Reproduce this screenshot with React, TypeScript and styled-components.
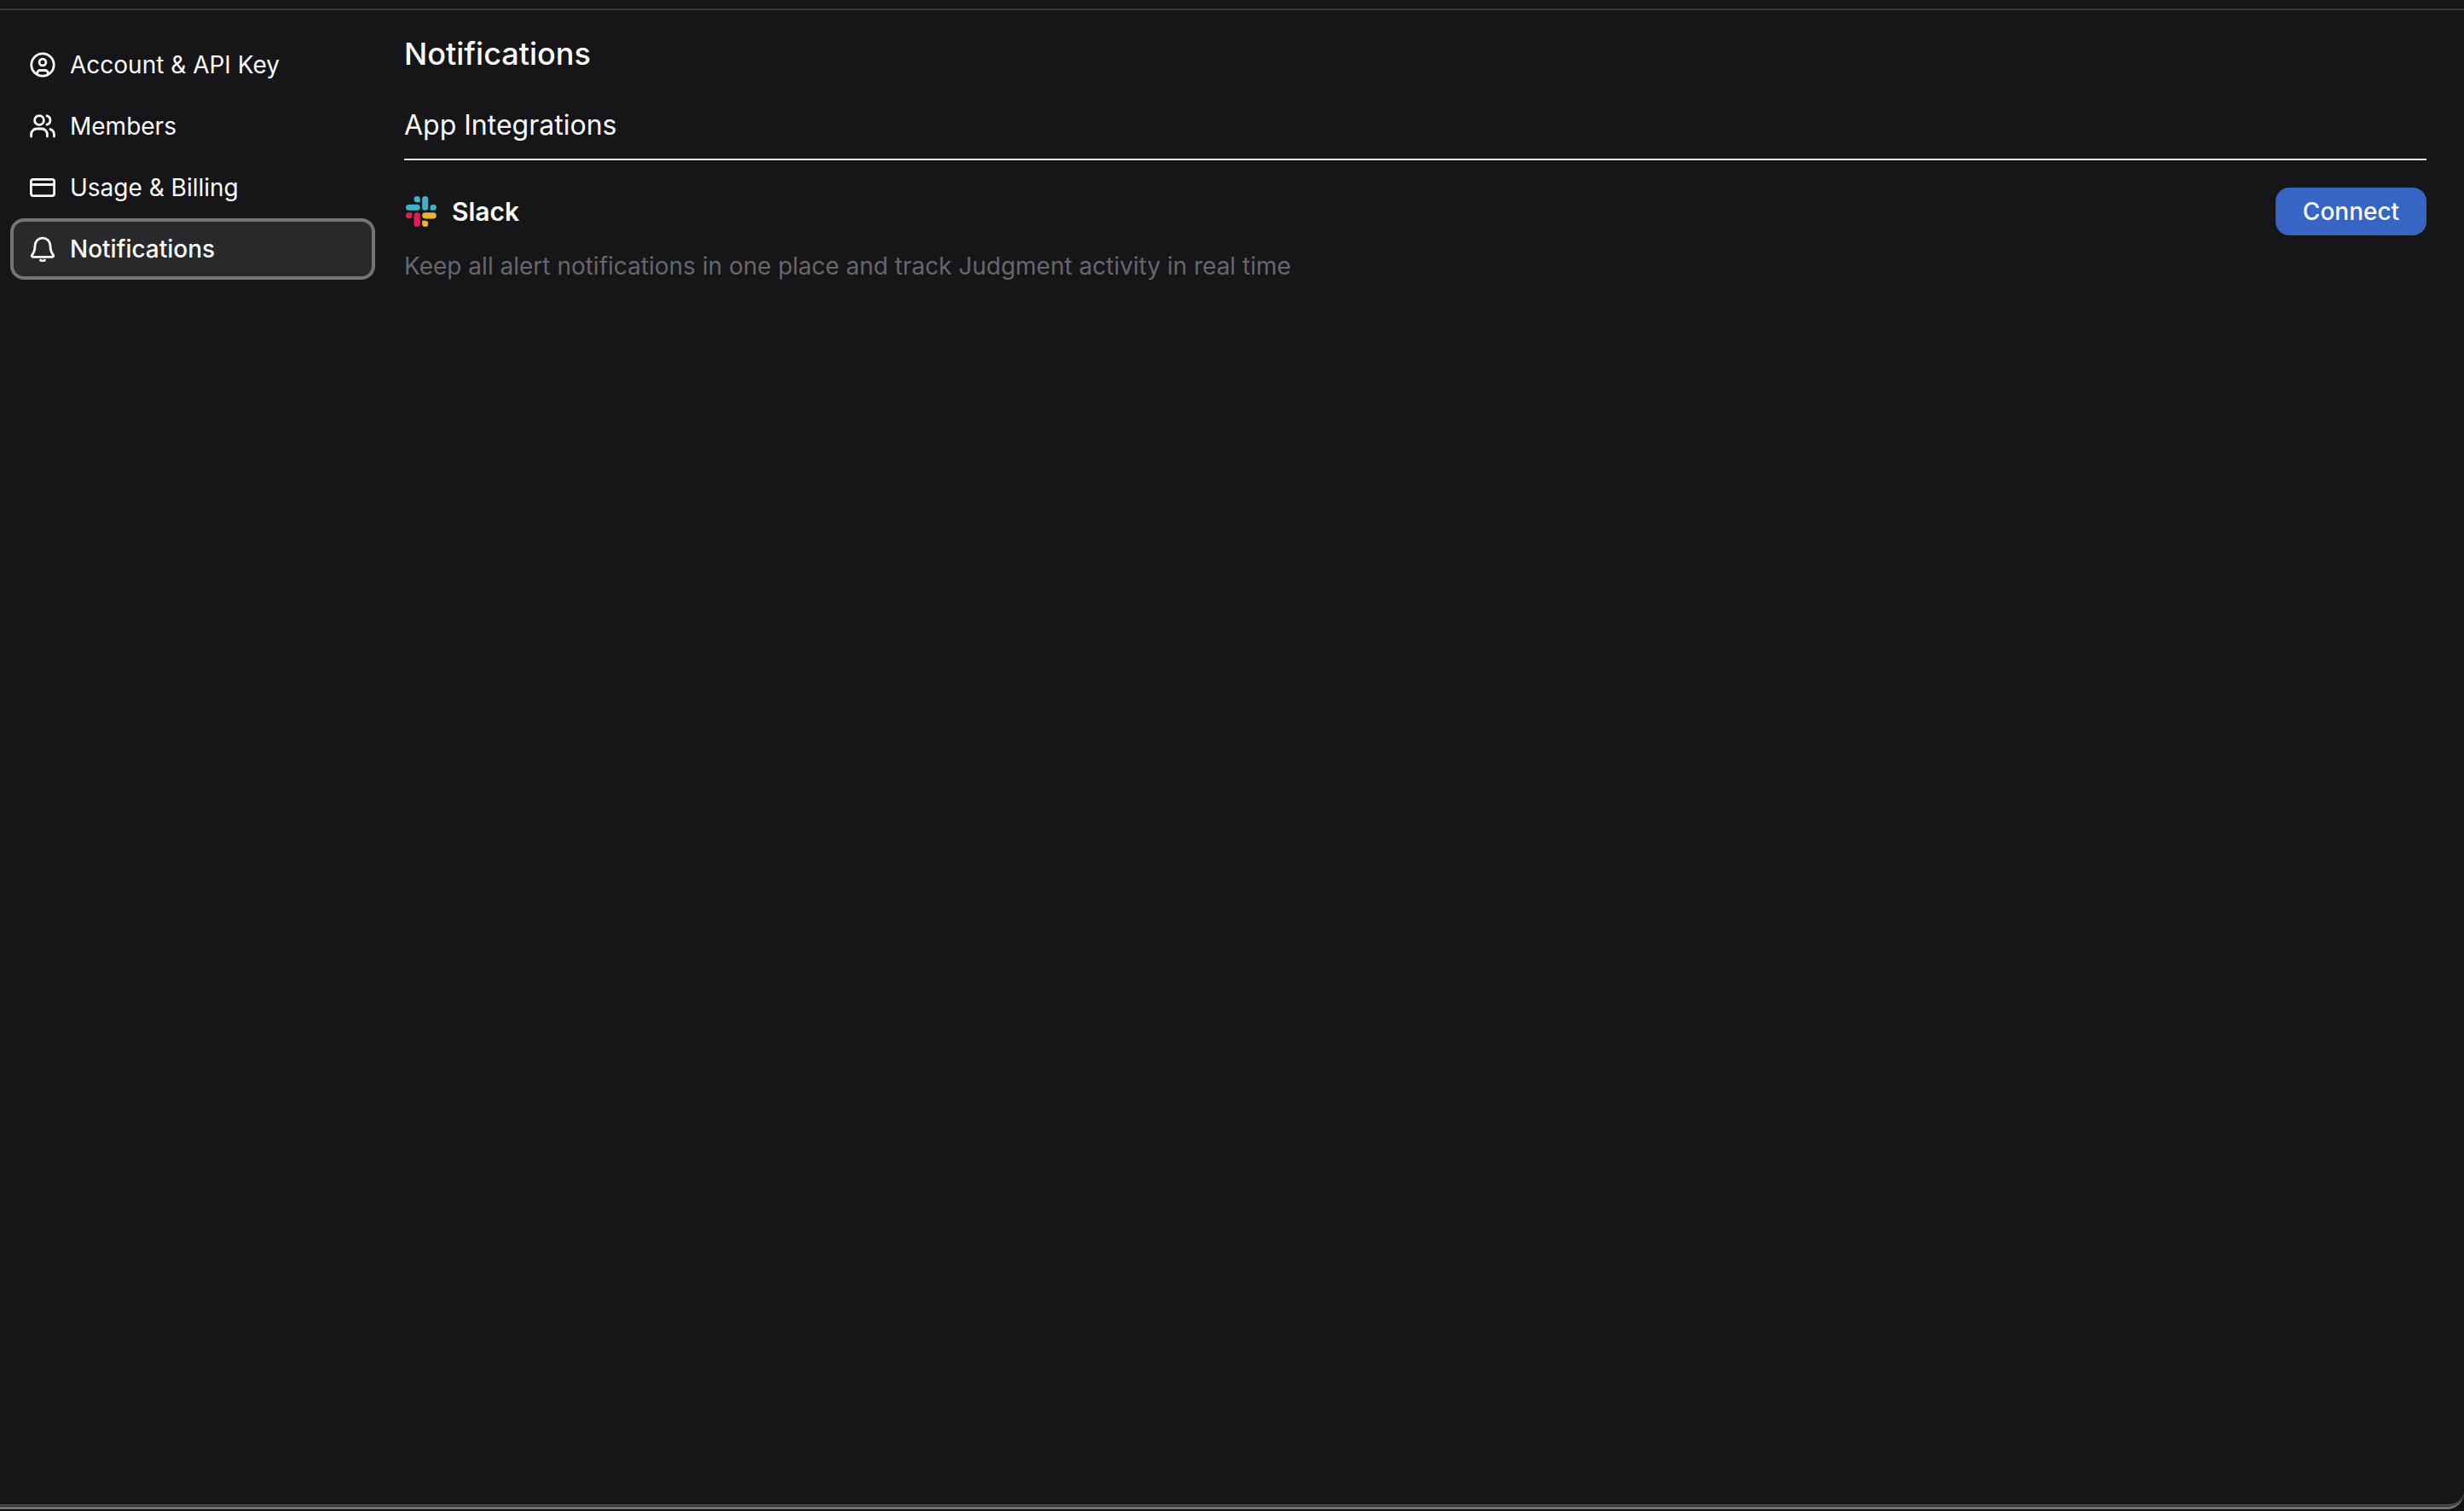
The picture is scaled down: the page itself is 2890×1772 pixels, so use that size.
import React from "react";
import styled, { createGlobalStyle } from "styled-components";

const Global = createGlobalStyle`
  html, body { margin: 0; padding: 0; background: #111113; }
  body { font-family: Inter, "Liberation Sans", sans-serif; -webkit-font-smoothing: antialiased; }
`;

const Frame = styled.div`
  height: 1772px;
  box-sizing: border-box;
  padding-bottom: 2px;
  background: #111113;
  display: flex;
  flex-direction: column;
`;

const Window = styled.div`
  flex: 1;
  min-height: 0;
  display: flex;
  flex-direction: column;
  background: #27272a;
  border-bottom: 3px solid #707072;
  border-bottom-right-radius: 20px;
  box-sizing: border-box;
`;

const Surface = styled.div`
  flex: 1;
  min-height: 0;
  display: flex;
  flex-direction: column;
  background: #161618;
  border-bottom: 2px solid #4a4a4c;
  margin-bottom: 1px;
  border-bottom-right-radius: 18px;
`;

const TopRule = styled.div`
  margin-top: 10px;
  height: 2px;
  background: #38383b;
`;

const Main = styled.div`
  flex: 1;
  display: flex;
  min-height: 0;
`;

const Sidebar = styled.nav`
  width: 428px;
  margin-left: 12px;
  padding-top: 28px;
  display: flex;
  flex-direction: column;
  flex: none;
`;

const NavItem = styled.div<{ $active?: boolean }>`
  height: 72px;
  box-sizing: border-box;
  display: flex;
  align-items: center;
  gap: 17px;
  padding-left: 19px;
  border: 4px solid ${(p) => (p.$active ? "#74747b" : "transparent")};
  border-radius: 16px;
  background: ${(p) => (p.$active ? "#29292c" : "transparent")};
  color: #fafafa;
  font-size: 28px;
  font-weight: ${(p) => (p.$active ? 500 : 400)};
  line-height: 40px;
`;

const NavIcon = styled.svg`
  width: 30px;
  height: 30px;
  flex: none;
  fill: none;
  stroke: #fafafa;
  stroke-width: 2.8;
  stroke-linecap: round;
  stroke-linejoin: round;
`;

const Content = styled.main`
  flex: 1;
  min-width: 0;
  margin-left: 34px;
  margin-right: 44px;
  padding-top: 29px;
`;

const Title = styled.h1`
  margin: 0;
  font-size: 36px;
  line-height: 44px;
  font-weight: 500;
  color: #fafafa;
`;

const SectionTitle = styled.h2`
  margin: 42px 0 0;
  padding-bottom: 19px;
  font-size: 32px;
  line-height: 40px;
  font-weight: 400;
  color: #fafafa;
  border-bottom: 2px solid #e6e6e6;
`;

const IntegrationRow = styled.div`
  margin-top: 32px;
  display: flex;
  align-items: center;
  justify-content: space-between;
`;

const IntegrationName = styled.div`
  display: flex;
  align-items: center;
  gap: 18px;
  color: #fafafa;
  font-size: 30px;
  font-weight: 600;
  line-height: 40px;
`;

const SlackMark = styled.svg`
  width: 36px;
  height: 36px;
  margin-left: 2px;
  flex: none;
`;

const ConnectButton = styled.button`
  width: 177px;
  height: 56px;
  border: none;
  border-radius: 16px;
  background: #3665c4;
  color: #fafafa;
  font-family: inherit;
  font-size: 28px;
  font-weight: 500;
  padding: 0;
`;

const Description = styled.p`
  margin: 16px 0 0;
  color: #66666e;
  font-size: 28px;
  line-height: 40px;
`;

const SlackLogo = () => (
  <SlackMark viewBox="0 0 54 54" aria-hidden="true">
    <path fill="#3fb2c6" d="M19.712.133a5.381 5.381 0 0 0-5.376 5.387 5.381 5.381 0 0 0 5.376 5.386h5.376V5.52A5.381 5.381 0 0 0 19.712.133m0 14.365H5.376A5.381 5.381 0 0 0 0 19.884a5.381 5.381 0 0 0 5.376 5.387h14.336a5.381 5.381 0 0 0 5.376-5.387 5.381 5.381 0 0 0-5.376-5.386" />
    <path fill="#3fb2c6" d="M53.76 19.884a5.381 5.381 0 0 0-5.376-5.386 5.381 5.381 0 0 0-5.376 5.386v5.387h5.376a5.381 5.381 0 0 0 5.376-5.387m-14.336 0V5.52A5.381 5.381 0 0 0 34.048.133a5.381 5.381 0 0 0-5.376 5.387v14.364a5.381 5.381 0 0 0 5.376 5.387 5.381 5.381 0 0 0 5.376-5.387" />
    <path fill="#ecb22e" d="M34.048 54a5.381 5.381 0 0 0 5.376-5.387 5.381 5.381 0 0 0-5.376-5.386h-5.376v5.386A5.381 5.381 0 0 0 34.048 54m0-14.365h14.336a5.381 5.381 0 0 0 5.376-5.386 5.381 5.381 0 0 0-5.376-5.387H34.048a5.381 5.381 0 0 0-5.376 5.387 5.381 5.381 0 0 0 5.376 5.386" />
    <path fill="#e01e5a" d="M0 34.249a5.381 5.381 0 0 0 5.376 5.386 5.381 5.381 0 0 0 5.376-5.386v-5.387H5.376A5.381 5.381 0 0 0 0 34.25m14.336-.001v14.364A5.381 5.381 0 0 0 19.712 54a5.381 5.381 0 0 0 5.376-5.387V34.25a5.381 5.381 0 0 0-5.376-5.387 5.381 5.381 0 0 0-5.376 5.387" />
  </SlackMark>
);

const AccountIcon = () => (
  <NavIcon viewBox="0 0 30 30">
    <circle cx="15" cy="15" r="13.2" />
    <circle cx="15" cy="12" r="3.9" />
    <path d="M8.600 25.700V25a3.500 3.500 0 0 1 3.500-3.500h5.800a3.500 3.500 0 0 1 3.500 3.500v.7" />
  </NavIcon>
);

const MembersIcon = () => (
  <NavIcon viewBox="0 0 30 30">
    <circle cx="11" cy="8" r="5.4" />
    <path d="M1.600 27v-2.500A6.500 6.500 0 0 1 8 18h6a6.500 6.500 0 0 1 6.400 6.500V27" />
    <path d="M20 2.800a5.400 5.400 0 0 1 0 10.400" />
    <path d="M24 18.600a6.500 6.500 0 0 1 4.400 6V27" />
  </NavIcon>
);

const BillingIcon = () => (
  <NavIcon viewBox="0 0 30 30">
    <rect x="1.400" y="5.300" width="27.200" height="19.400" rx="2.600" />
    <path d="M1.400 11.500h27.200" />
  </NavIcon>
);

const BellIcon = () => (
  <NavIcon viewBox="0 0 30 30">
    <path d="M15 2.200a9 9 0 0 0-9 9c0 6.500-2 9-3.600 11.200-.5.800 0 2 1.200 2h22.800c1.200 0 1.700-1.200 1.200-2C26 20.200 24 17.700 24 11.200a9 9 0 0 0-9-9z" />
    <path d="M12.500 28a3.300 3.300 0 0 0 5 0" />
  </NavIcon>
);

export default function App() {
  return (
    <>
      <Global />
      <Frame>
        <Window>
          <Surface>
            <TopRule />
            <Main>
              <Sidebar>
                <NavItem><AccountIcon />Account &amp; API Key</NavItem>
                <NavItem><MembersIcon />Members</NavItem>
                <NavItem><BillingIcon />Usage &amp; Billing</NavItem>
                <NavItem $active><BellIcon />Notifications</NavItem>
              </Sidebar>
              <Content>
                <Title>Notifications</Title>
                <SectionTitle>App Integrations</SectionTitle>
                <IntegrationRow>
                  <IntegrationName><SlackLogo />Slack</IntegrationName>
                  <ConnectButton>Connect</ConnectButton>
                </IntegrationRow>
                <Description>Keep all alert notifications in one place and track Judgment activity in real time</Description>
              </Content>
            </Main>
          </Surface>
        </Window>
      </Frame>
    </>
  );
}
